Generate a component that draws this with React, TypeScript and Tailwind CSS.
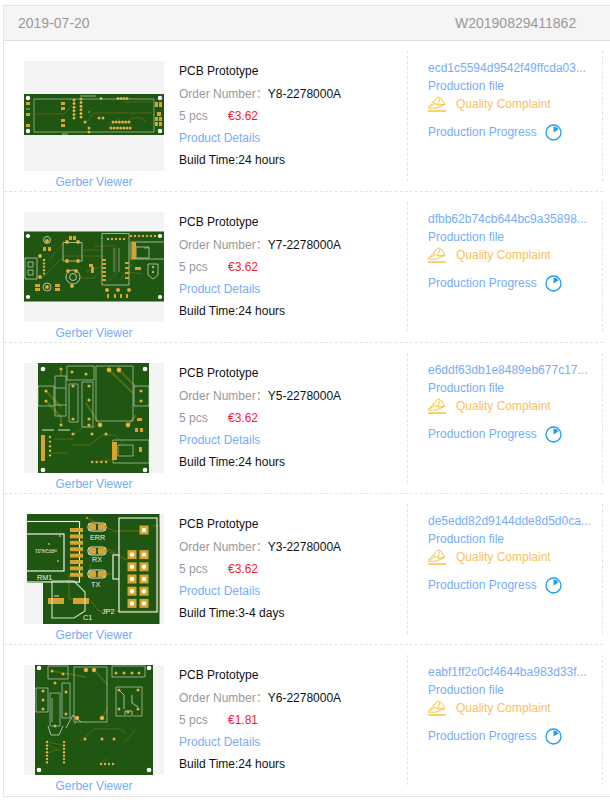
import React from "react";

const G = "#1f5712";
const P = "#d9a42e";
const T = "#6d6a12";
const S = "#d5e0cc";

function Pads({ pts, r = 1.4, hole = 0.55 }: { pts: number[][]; r?: number; hole?: number }) {
  return (
    <>
      {pts.map(([x, y], i) => (
        <g key={i}>
          <circle cx={x} cy={y} r={r} fill={P} />
          <circle cx={x} cy={y} r={hole} fill="#f3e9c4" />
        </g>
      ))}
    </>
  );
}
function Holes({ pts, r = 2.2 }: { pts: number[][]; r?: number }) {
  return (
    <>
      {pts.map(([x, y], i) => (
        <circle key={i} cx={x} cy={y} r={r} fill="#fff" />
      ))}
    </>
  );
}
function Silk({ d, w = 0.7, o = 1 }: { d: string; w?: number; o?: number }) {
  return <path d={d} fill="none" stroke={S} strokeWidth={w} opacity={o} />;
}
function Trace({ d, w = 0.7, c = T }: { d: string; w?: number; c?: string }) {
  return <path d={d} fill="none" stroke={c} strokeWidth={w} />;
}
function Rects({ rs }: { rs: number[][] }) {
  return (
    <>
      {rs.map(([x, y, w, h], i) => (
        <rect key={i} x={x} y={y} width={w} height={h} fill={P} />
      ))}
    </>
  );
}
const range = (x: number, y: number, dx: number, dy: number, n: number) =>
  Array.from({ length: n }, (_, i) => [x + dx * i, y + dy * i]);

function Board1() {
  return (
    <svg viewBox="0 0 140 110" className="block w-full h-full">
      <rect x="0" y="33" width="140" height="41" fill={G} />
      <Silk d="M10 38H130V71H10Z" o={0.8} />
      <Trace d="M2 53H40L48 45M60 62H62L70 52H128M100 64L108 57H118L122 61M84 67L96 57M100 41H130" />
      <Holes pts={[[4, 37], [136, 37], [4, 70], [136, 70]]} />
      <Pads r={1.5} hole={0.5} pts={[[77, 37.5], [94, 37.5], [97, 37.5], [100, 37.5], [103, 37.5], ...range(50, 39, 0, 3.6, 6), ...range(57, 38, 0, 3.6, 6), [61, 61], [75, 57], [79, 57], [65, 67], [65, 71], ...range(89, 61, 3.2, 0, 6), ...range(87, 67, 3.2, 0, 7)]} />
      <Rects rs={[[37, 41, 4, 3], [37, 46, 4, 3], [37, 58, 4, 3], [37, 63, 4, 3], [2, 41, 4, 3], [2, 52, 4, 3], [2, 63, 4, 3], [131, 41, 3, 5], [135, 41, 3, 5], [133, 51, 4, 4], [131, 56, 3, 4], [135, 56, 3, 4], [131, 61, 3, 4], [135, 61, 3, 4]]} />
      <Silk d="M56 35H72M38 73H44M2 48H6M65 50V52" />
    </svg>
  );
}

function Board2() {
  return (
    <svg viewBox="0 0 140 110" className="block w-full h-full">
      <rect x="0" y="19.5" width="140" height="70" fill={G} />
      <Trace d="M18 66L40 44H78M60 38L78 38M56 66H70L78 58M92 35V62L84 70M70 34H92M104 60L118 62M108 30V50M25 48L40 30M62 60L78 54M96 68L108 52" />
      <Silk d="M78 21.5V73H105V21.5ZM39 30.5H58V49H39ZM107 30H140M107 30V47H140M112 35H125V46H112ZM1 46H13V67H1ZM4 50H9V55H4ZM4 58H9V63H4Z" />
      <circle cx="49" cy="65" r="7" fill="none" stroke={S} strokeWidth="0.8" />
      <circle cx="49" cy="65" r="3.5" fill="none" stroke={S} strokeWidth="0.8" />
      <circle cx="23" cy="75" r="4" fill="none" stroke={S} strokeWidth="0.8" />
      <circle cx="23" cy="28" r="3.5" fill="none" stroke={S} strokeWidth="0.8" />
      <path d="M124 63V52H134V63L129 67Z" fill="none" stroke={S} strokeWidth="0.7" />
      <Holes r={2.1} pts={[[4, 24], [136, 24], [4, 85], [136, 85]]} />
      <Pads r={2} hole={0.6} pts={[[16, 44], [16, 65], [43, 30], [43, 49], [54, 30], [54, 49], [44, 59], [52, 59], [48, 74], [83, 78], [94, 78], [105, 78], [23, 75], [23, 29]]} />
      <Pads r={1.2} hole={0.4} pts={[...range(20, 48, 0, 3.4, 5), ...range(84, 27, 4, 0, 5), ...range(107, 24, 4, 0, 7), [129, 55], [129, 60]]} />
      <Rects rs={[[45, 24, 3, 4], [49, 24, 3, 4], [19, 35, 3, 4], [24, 35, 3, 4], [11, 72, 5, 3], [11, 76, 5, 3], [31, 72, 5, 3], [31, 76, 5, 3], [78, 47, 4, 2], [78, 51, 4, 2], [78, 55, 4, 2], [78, 59, 4, 2], [78, 63, 4, 2], [78, 67, 4, 2], [101, 50, 4, 2], [101, 55, 4, 2], [101, 60, 4, 2], [101, 65, 4, 2], [83, 82, 2, 4], [90, 82, 2, 4], [96, 82, 2, 4], [102, 82, 2, 4], [108, 30, 4, 17], [65, 52, 4, 3], [111, 55, 6, 3], [67, 55, 3, 6]]} />
      <Silk d="M120 36h5M90 36V60M95 36V60" w={0.5} />
    </svg>
  );
}

function Board3() {
  const thick = "#4f6f15";
  return (
    <svg viewBox="0 0 140 110" className="block w-full h-full">
      <rect x="14" y="0" width="111" height="110" fill={G} />
      <Trace w={2.2} c={thick} d="M22 28L37 44M22 38L37 54M85 7L109 30M95 7L112 24M76 62L62 40M104 62L112 52M37 6V13M37 53V62" />
      <Trace w={0.8} d="M49 71L60 64H72M48 82H66L78 72H90L100 80M30 76H50M26 90H44M68 99L92 96" />
      <Silk o={0.75} w={0.8} d="M43 3V17H70V3ZM72 3V58H109V3ZM31 13H42V53H31ZM45 21H54V59H45ZM58 19H69V64H58ZM14 23H30V43H14ZM110 23H125V43H110ZM89 77H125V100H89ZM94 82H109V93H94ZM31 25H42M31 42H42" />
      <Silk w={1} d="M18 67H30M34 67H46" />
      <Holes r={2.3} pts={[[19, 6], [121, 6], [19, 107], [121, 107]]} />
      <Pads r={2.4} hole={0.8} pts={[[85, 7], [95, 7], [76, 62], [104, 62]]} />
      <Pads r={1.6} hole={0.6} pts={[[37, 6], [37, 62], [48, 9], [62, 11], [49, 23], [49, 56], [65, 23], [65, 37], [65, 56], [65, 62], [22, 28], [22, 38], [117, 28], [117, 38], [49, 71], [68, 71], [82, 71]]} />
      <Pads r={1.2} hole={0.5} pts={[...range(19, 73, 0, 4, 7), ...range(26, 74, 0, 4.6, 5), ...range(68, 99, 4.7, 0, 4)]} />
      <Rects rs={[[17, 72, 4, 26], [88, 79, 5, 18], [113, 55, 5, 3], [111, 65, 3, 4], [116, 65, 3, 4], [115, 84, 3, 5]]} />
    </svg>
  );
}

function Board4() {
  return (
    <svg viewBox="0 0 140 110" className="block w-full h-full" style={{ fontFamily: '"Liberation Sans", Arial, sans-serif' }}>
      <path d="M3 0H135.5V110H19V69H3Z" fill={G} />
      <Trace w={1} d="M63 4L90 17H118M45 60V85H65L75 97H135V12H128M63 60H90M66 37H83L103 46M78 62H66V50M82 34L96 42" />
      <rect x="0" y="7.5" width="55.5" height="60.5" fill="none" stroke="#fff" strokeWidth="1.1" />
      <rect x="0" y="20" width="40" height="37" fill="none" stroke="#fff" strokeWidth="1.1" />
      <Rects rs={[...range(46, 14, 0, 6.4, 8).map(([x, y]) => [x, y, 13, 4]), [24, 84, 16, 6], [49, 84, 16, 6]]} />
      <Silk d="M28 67H50L61 78V97L50 104H28ZM30 82H35" w={1.1} />
      <path d="M95 4H133V98H95Z M95 41H89V65H95" fill="none" stroke="#fff" strokeWidth="1.1" />
      {[[64, 9], [64, 33], [64, 56]].map(([x, y], i) => (
        <g key={i}>
          <rect x={x} y={y} width="18" height="8" rx="3" fill="none" stroke="#e6e6e0" strokeWidth="1" />
          <rect x={x + 1} y={y + 1} width="7" height="6" rx="1" fill={P} />
          <rect x={x + 10} y={y + 1} width="7" height="6" rx="1" fill={P} />
        </g>
      ))}
      {[...range(108, 40.6, 0, 12.2, 5), ...range(120, 40.6, 0, 12.2, 5), [120, 16]].map(([x, y], i) => (
        <g key={i}>
          <rect x={x - 4.5} y={y - 4.5} width="9" height="9" fill={P} />
          <circle cx={x} cy={y} r="2.2" fill="#fff" />
        </g>
      ))}
      <g fill="#eef0e6" fontSize="7.2">
        <text x="66" y="25.5">ERR</text>
        <text x="68" y="48">RX</text>
        <text x="67" y="73">TX</text>
        <text x="13" y="66">RM1</text>
        <text x="59" y="106">C1</text>
        <text x="78" y="100">JP2</text>
        <text x="22" y="36" textAnchor="middle" fontSize="4.6" transform="rotate(180 22 36)" dominantBaseline="middle">nRF24L01</text>
      </g>
      <Pads r={0.9} hole={0.4} pts={[[25, 30], [36, 22], [34, 47], [63, 4]]} />
    </svg>
  );
}

function Board5() {
  return (
    <svg viewBox="0 0 140 110" className="block w-full h-full">
      <rect x="11" y="0" width="118" height="110" fill={G} />
      <Trace w={1.4} c="#4f6f15" d="M28 6L62 12M70 5L84 20M50 60L54 53M78 53L84 42" />
      <Trace w={0.7} d="M56 76L70 64H96L102 68M24 80L36 86M100 78L112 64M76 99L84 93M24 88L34 84M23 77L38 80" />
      <Silk o={0.75} w={0.8} d="M24 1V14H44V1ZM50 2V57H83V2ZM88 1V12H121V1ZM92 22V51H118V22ZM12 23V47H24V23ZM26 28H36V61H26ZM28 33V57M38 18H46V53H38Z" />
      <Silk o={0.75} d="M24 61L27 70H35L39 61M42 63L49 50L57 57M96 26L100 30V44M108 30V38L114 42M101 50V46H108V50" w={1} />
      <Holes r={2.3} pts={[[15, 3], [125, 3], [15, 105], [125, 105]]} />
      <Pads r={2.3} hole={0.8} pts={[[62, 5], [70, 5], [53, 53], [78, 53]]} />
      <Pads r={1.5} hole={0.6} pts={[[28, 6], [39, 9], [19, 26], [19, 35], [19, 44], [92, 8], [100, 8], [108, 8], [115, 8], [31, 18], [31, 61], [42, 27], [42, 49], [95, 25], [114, 25], [95, 44], [114, 44], [104, 47], [61, 74], [78, 74], [90, 74]]} />
      <Pads r={1.2} hole={0.5} pts={[...range(23, 77, 0, 3.4, 7), ...range(40, 77, 0, 3.4, 7), ...range(77, 99, 4, 0, 4)]} />
    </svg>
  );
}

function ComplaintIcon() {
  return (
    <svg viewBox="0 0 18 16" width="18" height="16" className="shrink-0" fill="none" stroke="#f6c243" strokeWidth="1">
      <path d="M0.6 11.2L10 0.8L14 3L16.8 8.4L8 12.2H0.6Z" />
      <path d="M5 6.4L10 9L11.6 2.6M16.8 8.4L10 9M0.6 11.2L6.6 8" />
      <path d="M0 15H18" strokeWidth="1.5" />
    </svg>
  );
}

function ProgressIcon() {
  return (
    <svg viewBox="0 0 17 17" width="17" height="17" className="shrink-0">
      <circle cx="8.5" cy="8.5" r="7.5" fill="none" stroke="#1e9cf0" strokeWidth="1.3" />
      <path d="M8.5 2.4A6.1 6.1 0 0 1 13.6 5.2L8.5 8.5Z" fill="#1e9cf0" />
    </svg>
  );
}

const rows = [
  { img: <Board1 />, id: "Y8-2278000A", price: "€3.62", time: "24 hours", hash: "ecd1c5594d9542f49ffcda03..." },
  { img: <Board2 />, id: "Y7-2278000A", price: "€3.62", time: "24 hours", hash: "dfbb62b74cb644bc9a35898..." },
  { img: <Board3 />, id: "Y5-2278000A", price: "€3.62", time: "24 hours", hash: "e6ddf63db1e8489eb677c17..." },
  { img: <Board4 />, id: "Y3-2278000A", price: "€3.62", time: "3-4 days", hash: "de5edd82d9144dde8d5d0ca..." },
  { img: <Board5 />, id: "Y6-2278000A", price: "€1.81", time: "24 hours", hash: "eabf1ff2c0cf4644ba983d33f..." },
];

export default function App() {
  return (
    <div
      className="w-[610px] h-[804px] overflow-hidden bg-white pt-[5px] pl-[3px] text-[12px]"
      style={{ fontFamily: '"Liberation Sans", Arial, "Noto Sans CJK SC", sans-serif' }}
    >
      <div className="w-[640px] border border-[#e5e5e5]">
        <div className="flex h-[35px] items-center bg-[#f5f5f5] border-b border-[#e0e0e0] pl-[14px] text-[14px] text-[#999999]">
          <span className="w-[437px]">2019-07-20</span>
          <span>W20190829411862</span>
        </div>
        {rows.map((r, i) => (
          <div
            key={r.id}
            className={`flex w-[599px] h-[151px] pl-[20px] pt-[10px] ${i < rows.length - 1 ? "border-b border-dashed border-[#e4e4e4]" : ""}`}
          >
            <div className="w-[140px] pt-[10px]">
              <div className="w-[140px] h-[110px] bg-[#f4f4f4]">{r.img}</div>
              <div className="text-center text-[#76acfb] leading-[22px]">Gerber Viewer</div>
            </div>
            <div className="ml-[15px] w-[228px] pt-[9px] leading-[22px]">
              <div className="text-[#111111]">PCB Prototype</div>
              <div className="mt-[1px]">
                <span className="text-[#999999]">Order Number：</span>
                <span className="text-[#111111]">{r.id}</span>
              </div>
              <div className="flex text-[#999999]">
                <span className="w-[49px]">5 pcs</span>
                <span className="text-[#f5222d]">{r.price}</span>
              </div>
              <div className="text-[#76acfb]">Product Details</div>
              <div className="text-[#111111]">Build Time:{r.time}</div>
            </div>
            <div className="w-[196px] h-[130px] border-x border-dashed border-[#e4e4e4] pl-[20px] pt-[8px]">
              <div className="text-[#76acfb] leading-[18px]">{r.hash}</div>
              <div className="text-[#76acfb] leading-[18px]">Production file</div>
              <div className="flex items-center h-[18px] text-[#fbbf5e]">
                <ComplaintIcon />
                <span className="ml-[10px]">Quality Complaint</span>
              </div>
              <div className="flex items-center mt-[10px] h-[18px] text-[#76acfb]">
                <span className="w-[117px]">Production Progress</span>
                <ProgressIcon />
              </div>
            </div>
          </div>
        ))}
      </div>
    </div>
  );
}
